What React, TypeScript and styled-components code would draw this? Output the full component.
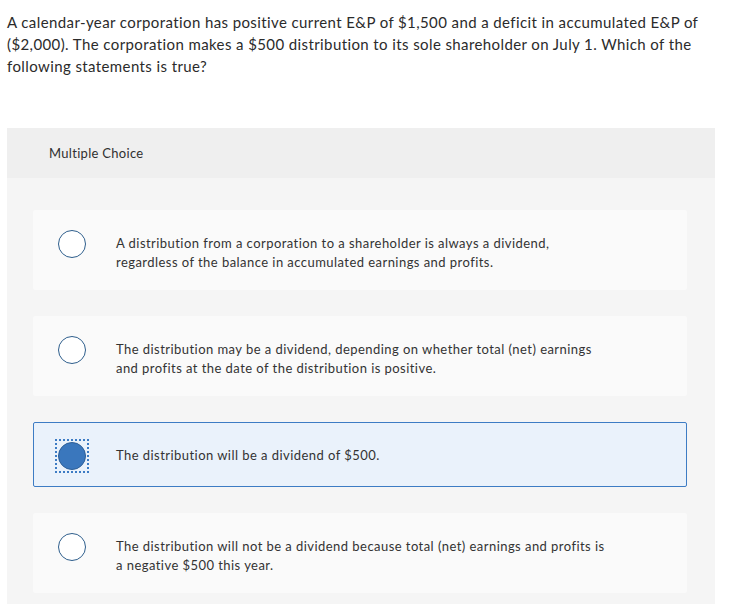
import styled, { createGlobalStyle } from "styled-components";

const GlobalStyle = createGlobalStyle`
  html, body {
    margin: 0;
    padding: 0;
    background: #fff;
  }
  body {
    font-family: Lato, "Open Sans", Arial, sans-serif;
    color: #2f2f2f;
  }
`;

type Choice = {
  id: string;
  text: string;
};

const choices: Choice[] = [
  {
    id: "a",
    text: "A distribution from a corporation to a shareholder is always a dividend, regardless of the balance in accumulated earnings and profits.",
  },
  {
    id: "b",
    text: "The distribution may be a dividend, depending on whether total (net) earnings and profits at the date of the distribution is positive.",
  },
  {
    id: "c",
    text: "The distribution will be a dividend of $500.",
  },
  {
    id: "d",
    text: "The distribution will not be a dividend because total (net) earnings and profits is a negative $500 this year.",
  },
];

const selectedId = "c";

const App = () => {
  return (
    <>
      <GlobalStyle />
      <Page>
        <Question>
          A calendar-year corporation has positive current E&amp;P of $1,500 and a deficit in accumulated E&amp;P of
          ($2,000). The corporation makes a $500 distribution to its sole shareholder on July 1. Which of the
          following statements is true?
        </Question>
        <Panel>
          <PanelHeader>Multiple Choice</PanelHeader>
          <ChoiceList>
            {choices.map(({ id, text }) => {
              const active = id === selectedId;
              return (
                <Card key={id} $active={active}>
                  <RadioSlot>
                    <Focus $active={active}>
                      <Radio $active={active} />
                    </Focus>
                  </RadioSlot>
                  <ChoiceText>{text}</ChoiceText>
                </Card>
              );
            })}
          </ChoiceList>
        </Panel>
      </Page>
    </>
  );
};

export default App;

const Page = styled.div`
  padding: 11px 0 0 7px;
  width: 708px;
`;

const Question = styled.p`
  margin: 0 0 51px;
  font-size: 15px;
  line-height: 22px;
  letter-spacing: 0.4px;
  color: #2b2b2b;
  width: 704px;
`;

const Panel = styled.section`
  background: #f5f5f5;
  min-height: 480px;
`;

const PanelHeader = styled.div`
  height: 50px;
  display: flex;
  align-items: center;
  padding-left: 42px;
  background: #efefef;
  font-size: 13px;
  letter-spacing: 0.3px;
  color: #2f2f2f;
`;

const ChoiceList = styled.div`
  display: flex;
  flex-direction: column;
  gap: 26px;
  padding: 32px 28px 11px 26px;
`;

const Card = styled.div<{ $active: boolean }>`
  box-sizing: border-box;
  display: flex;
  align-items: flex-start;
  min-height: 65px;
  padding: 23px 0 17px;
  border: 1px solid ${({ $active }) => ($active ? "#3d7cc4" : "transparent")};
  border-radius: 2px;
  background: ${({ $active }) => ($active ? "#eaf2fb" : "#fafafa")};
`;

const RadioSlot = styled.div`
  flex: 0 0 82px;
  height: 19px;
  display: flex;
  align-items: center;
  padding-left: 21px;
  box-sizing: border-box;
`;

const Focus = styled.div<{ $active: boolean }>`
  width: 34px;
  height: 34px;
  box-sizing: border-box;
  display: flex;
  align-items: center;
  justify-content: center;
  border: 2px dotted ${({ $active }) => ($active ? "#3d7cc4" : "transparent")};
`;

const Radio = styled.span<{ $active: boolean }>`
  box-sizing: border-box;
  width: 28px;
  height: 28px;
  border-radius: 50%;
  border: 1.5px solid ${({ $active }) => ($active ? "#2d5f98" : "#2e5e8c")};
  background: ${({ $active }) => ($active ? "#3a77bd" : "#ffffff")};
`;

const ChoiceText = styled.div`
  font-size: 13px;
  line-height: 19px;
  letter-spacing: 0.45px;
  color: #333333;
  max-width: 497px;
`;
